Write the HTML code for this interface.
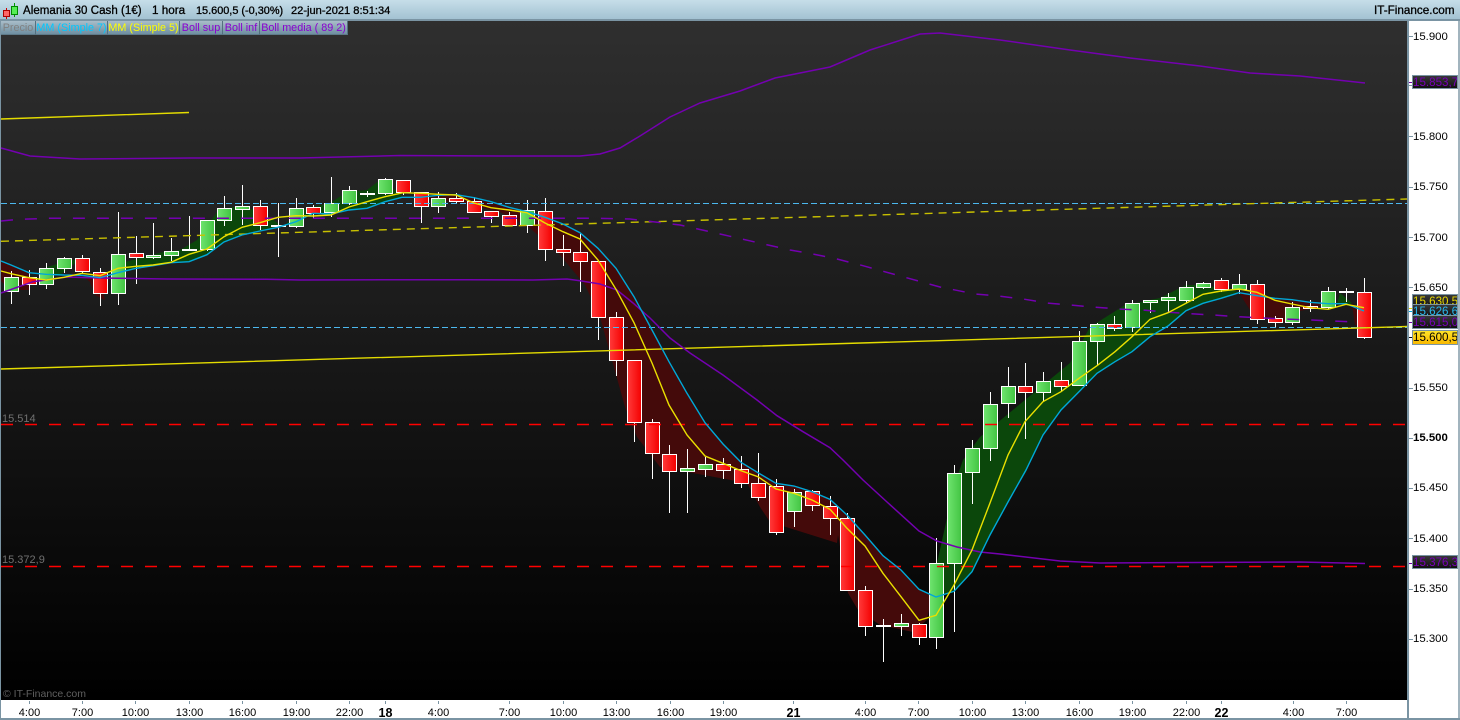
<!DOCTYPE html>
<html><head><meta charset="utf-8"><style>
html,body{margin:0;padding:0;background:#fff;width:1460px;height:720px;overflow:hidden}
svg{position:absolute;left:0;top:0}
.g{fill:url(#gg)}.r{fill:url(#gr)}
.g,.r{stroke:#fff;stroke-width:1;width:14px;shape-rendering:crispEdges}
.d{fill:#fff;width:15px;height:2px;shape-rendering:crispEdges}
div{position:absolute;font-family:"Liberation Sans",sans-serif;white-space:nowrap}
#top{left:0;top:0;width:1460px;height:19px;background:linear-gradient(#c6dee9,#a3c2d2);border-bottom:2px solid #7a94a3}
.t{top:4px;font-size:12px;line-height:14px;color:#000;-webkit-text-stroke:.3px #000}
.l{top:21px;height:12px;line-height:12px;font-size:10.8px;background:linear-gradient(#a9bdc9,#6f8fa1);border-right:1px solid #54707f;text-align:center;border-bottom:1px solid #5f7a89;padding-top:1px}
.y{left:1413px;font-size:11.4px;line-height:14px;color:#000}
.x{top:707px;font-size:11px;line-height:13px;color:#000;transform:translateX(-50%)}
.b{left:1412px;width:44px;height:12px;border:1px solid #7a94a3;font-size:11.6px;line-height:13px;text-align:center;background:linear-gradient(#383838,#101010);overflow:hidden}
</style></head><body>
<svg width="1460" height="720" viewBox="0 0 1460 720" fill="none">
<defs>
<linearGradient id="bg" x1="0" y1="0" x2="0" y2="1"><stop offset="0" stop-color="#2f2f2f"/><stop offset="1" stop-color="#000"/></linearGradient>
<linearGradient id="gg"><stop offset="0" stop-color="#6fe46f"/><stop offset="1" stop-color="#42c442"/></linearGradient>
<linearGradient id="gr"><stop offset="0" stop-color="#ff3a3a"/><stop offset="1" stop-color="#f40000"/></linearGradient>
</defs>
<rect x="1" y="21" width="1406" height="679" fill="url(#bg)"/>
<g fill="#0b470b">
<path d="M937 563L945 527 955 483 963 460 980 437 1070 363 1090 327 1125 305 1160 298 1180 288 1186 285 1203 285 1221 288 1239 292 1221 298.3 1203 303.3 1186 310.7 1168 326 1150 336.7 1132 351.7 1115 361.7 1097 373.3 1079 391.7 1061 410 1043 435 1026 472 1008 502 990 535 972 571.7 954 591.3 937 597Z"/>
<path d="M118 272.7L125 262 163 252 180 250 197 240 217 212 233 207 260 210 283 227 300 210 330 203 347 192 367 190 380 180 400 193 402 197.3 385 201.7 367 208.3 349 210 331 214 313 213.3 296 221.7 278 227.3 260 231 242 235 224 242 207 254.7 189 261.7 171 262.7 153 265.7 136 268.3Z"/>
<path d="M1337 303.7L1340 293 1352 303 1350 304Z"/>
<path d="M40 273.5L47 267 64 262 82 258 60 275 46 274.3Z"/>
</g>
<g fill="#440a0a">
<path d="M403 197.3L420 197.3 438 195.3 456 194.7 474 197.7 491 201.7 509 207.3 527 211.7 545 217.3 563 224 580 232.7 598 248.3 616 268.3 634 296.7 652 330 669 361.7 687 393.3 705 422.7 723 444 741 462.3 758 472.7 776 483.3 794 486 812 491.7 830 499.3 847 515 865 535 883 555.7 901 570 919 589.3 932 596 927 620 913 632 880 625 858 610 848 593 838 535 837 543 770 522 760 507 747 483 660 467 637 437 625 407 600 317 585 285 560 255 530 228 500 212 470 205 440 200Z"/>
<path d="M1239 292.7L1257 295.7 1275 298.3 1292 299.7 1310 302.3 1328 303.7 1310 309 1300 311 1285 322 1268 320 1250 310Z"/>
<path d="M1352 304L1364 311 1364 325 1355 325Z"/>
<path d="M1 262L11 265 29 272.7 30 290 10 290 1 281Z"/>
<path d="M82 275.3L100 277.7 105 300 95 295 90 282Z"/>
</g>
<path stroke="#fff" stroke-width="1" shape-rendering="crispEdges" d="M11.5 271V304M29.5 270V295M46.5 263V289M64.5 257V273M82.5 255V273M100.5 268V306M118.5 212V305M136.5 236V284M153.5 223V259M171.5 238V261M189.5 216V251M207.5 220V251M224.5 196V226M242.5 185V225M260.5 200V230M278.5 203V257M296.5 198V228M313.5 205V219M331.5 177V217M349.5 186V205M367.5 191V197M385.5 178V195M403.5 180V195M421.5 192V223M438.5 192V213M456.5 193V204M474.5 197V212M491.5 211V223M509.5 212V225M527.5 200V233M545.5 198V261M563.5 235V266M580.5 233V292M598.5 261V340M616.5 312V376M634.5 360V442M652.5 419V479M669.5 445V513M687.5 449V513M705.5 457V477M723.5 458V479M741.5 456V488M758.5 453V501M776.5 479V535M794.5 489V527M812.5 490V511M830.5 496V535M847.5 513V590M865.5 586V636M883.5 619V662M901.5 614V636M919.5 623V645M936.5 538V649M954.5 465V632M972.5 440V504M990.5 392V461M1008.5 367V418M1025.5 363V439M1043.5 372V401M1061.5 362V391M1079.5 331V385M1097.5 323V365M1114.5 316V331M1132.5 300V332M1150.5 300V313M1168.5 293V312M1186.5 281V303M1203.5 282V289M1221.5 278V292M1239.5 274V294M1257.5 280V324M1275.5 316V327M1292.5 302V325M1310.5 300V312M1328.5 287V309M1346.5 288V302M1364.5 278V339"/>
<rect class="g" x="4.5" y="277.5" height="14"/><rect class="r" x="22.5" y="277.5" height="7"/><rect class="g" x="39.5" y="268.5" height="16"/><rect class="g" x="57.5" y="258.5" height="10"/><rect class="r" x="75.5" y="258.5" height="13"/><rect class="r" x="93.5" y="272.5" height="21"/><rect class="g" x="111.5" y="254.5" height="39"/><rect class="r" x="129.5" y="253.5" height="4"/><rect class="g" x="146.5" y="255.5" height="2"/><rect class="g" x="164.5" y="251.5" height="4"/><rect class="d" x="182" y="249"/><rect class="g" x="200.5" y="220.5" height="29"/><rect class="g" x="217.5" y="208.5" height="12"/><rect class="g" x="235.5" y="206.5" height="3"/><rect class="r" x="253.5" y="206.5" height="19"/><rect class="d" x="271" y="225"/><rect class="g" x="289.5" y="208.5" height="18"/><rect class="r" x="306.5" y="207.5" height="6"/><rect class="g" x="324.5" y="203.5" height="9"/><rect class="g" x="342.5" y="190.5" height="13"/><rect class="d" x="360" y="193"/><rect class="g" x="378.5" y="179.5" height="14"/><rect class="r" x="396.5" y="180.5" height="12"/><rect class="r" x="414.5" y="192.5" height="14"/><rect class="g" x="431.5" y="198.5" height="8"/><rect class="r" x="449.5" y="198.5" height="3"/><rect class="r" x="467.5" y="201.5" height="11"/><rect class="r" x="484.5" y="211.5" height="5"/><rect class="r" x="502.5" y="215.5" height="10"/><rect class="g" x="520.5" y="210.5" height="15"/><rect class="r" x="538.5" y="211.5" height="38"/><rect class="r" x="556.5" y="249.5" height="3"/><rect class="r" x="573.5" y="252.5" height="9"/><rect class="r" x="591.5" y="261.5" height="56"/><rect class="r" x="609.5" y="317.5" height="43"/><rect class="r" x="627.5" y="360.5" height="62"/><rect class="r" x="645.5" y="422.5" height="31"/><rect class="r" x="662.5" y="454.5" height="17"/><rect class="g" x="680.5" y="468.5" height="3"/><rect class="g" x="698.5" y="464.5" height="5"/><rect class="r" x="716.5" y="464.5" height="6"/><rect class="r" x="734.5" y="469.5" height="14"/><rect class="r" x="751.5" y="483.5" height="14"/><rect class="r" x="769.5" y="486.5" height="46"/><rect class="g" x="787.5" y="492.5" height="19"/><rect class="r" x="805.5" y="491.5" height="14"/><rect class="r" x="823.5" y="506.5" height="12"/><rect class="r" x="840.5" y="518.5" height="72"/><rect class="r" x="858.5" y="590.5" height="36"/><rect class="d" x="876" y="625"/><rect class="g" x="894.5" y="623.5" height="3"/><rect class="r" x="912.5" y="624.5" height="13"/><rect class="g" x="929.5" y="563.5" height="74"/><rect class="g" x="947.5" y="473.5" height="90"/><rect class="g" x="965.5" y="448.5" height="24"/><rect class="g" x="983.5" y="404.5" height="44"/><rect class="g" x="1001.5" y="386.5" height="17"/><rect class="r" x="1018.5" y="386.5" height="6"/><rect class="g" x="1036.5" y="381.5" height="11"/><rect class="r" x="1054.5" y="380.5" height="6"/><rect class="g" x="1072.5" y="341.5" height="44"/><rect class="g" x="1090.5" y="324.5" height="17"/><rect class="r" x="1107.5" y="324.5" height="4"/><rect class="g" x="1125.5" y="303.5" height="24"/><rect class="g" x="1143.5" y="300.5" height="2"/><rect class="g" x="1161.5" y="297.5" height="3"/><rect class="g" x="1179.5" y="287.5" height="13"/><rect class="g" x="1196.5" y="283.5" height="4"/><rect class="r" x="1214.5" y="280.5" height="9"/><rect class="g" x="1232.5" y="284.5" height="5"/><rect class="r" x="1250.5" y="284.5" height="35"/><rect class="r" x="1268.5" y="318.5" height="4"/><rect class="g" x="1285.5" y="307.5" height="15"/><rect class="r" x="1303.5" y="306.5" height="2"/><rect class="g" x="1321.5" y="291.5" height="16"/><rect class="d" x="1339" y="291"/><rect class="r" x="1357.5" y="292.5" height="45"/>
<path stroke="#4cb8ee" stroke-width="1" stroke-dasharray="6 3" d="M1 203.5H1407M1 327.5H1407"/>
<path stroke="#c8c000" stroke-width="1.4" stroke-dasharray="8 6" d="M1 241.3L1407 199"/>
<path stroke="#e4dc00" stroke-width="1.4" d="M1 369L1407 326.5M1 119L189 112.5"/>
<path stroke="#ff0000" stroke-width="1.4" stroke-dasharray="12 12" d="M1 424.5H1407M1 566.5H1407"/>
<path stroke="#7400b0" stroke-width="1.5" d="M1 148L30 156 80 159 190 158 300 158 400 155.5 500 156 580 156 600 154 620 148 640 136 670 117 700 103 740 91 775 78 830 67 870 50 920 34 940 33 1000 40 1070 50 1130 58 1200 66 1250 73 1300 76 1365 83"/>
<path stroke="#7400b0" stroke-width="1.5" d="M1 293L33 281.7 67 277 100 278 167 279 267 279.3 300 280 400 279.7 467 279.7 533 280 567 279 580 280.7 600 284 617 290 633 303 650 318 670 338 690 353 723 375 757 400 777 415.7 803 431.7 830 447.7 843 460 863 480 887 502 919 531 937 541 957 547 980 552 1000 554 1060 561 1100 563 1200 562.5 1300 562 1365 563.5"/>
<path stroke="#7400b0" stroke-width="1.5" stroke-dasharray="12 12" d="M1 221L20 219.3 48 218.3 600 218.3 630 219 680 225 720 234 790 250 813 254 837 259 863 265.7 940 287 975 294 998 296 1023 299 1047 303 1070 305 1093 307 1118 309 1142 310 1165 312 1190 313.7 1213 315 1238 316.7 1262 318 1285 319 1310 320 1333 321 1358 322"/>
<path stroke="#00a8d8" stroke-width="1.4" d="M1 261L11 265 29 272.7 46 274.3 64 275 82 275.3 100 277.7 118 272.7 136 268.3 153 265.7 171 262.7 189 261.7 207 254.7 224 242 242 235 260 231 278 227.3 296 221.7 313 213.3 331 214 349 210 367 208.3 385 201.7 402 197.3 420 197.3 438 195.3 456 194.7 474 197.7 491 201.7 509 207.3 527 211.7 545 217.3 563 224 580 232.7 598 248.3 616 268.3 634 296.7 652 330 669 361.7 687 393.3 705 422.7 723 444 741 462.3 758 472.7 776 483.3 794 486 812 491.7 830 499.3 847 515 865 535 883 555.7 901 570 919 589.3 936 597 954 591.3 972 571.7 990 535 1008 502 1026 470 1043 435 1061 410 1079 391.7 1097 373.3 1115 361.7 1132 351.7 1150 336.7 1168 326 1186 310.7 1203 303.3 1221 298.3 1239 292.7 1257 295.7 1275 298.3 1292 299.7 1310 302.3 1328 303.7 1346 303.7 1364 311"/>
<path stroke="#eae000" stroke-width="1.4" d="M1 271L11 273.7 29 277.7 46 280 64 277.3 82 273.3 100 275.7 118 268.3 136 266.3 153 265 171 262.3 189 254.3 207 249 224 236.7 242 227.3 260 222.7 278 217.3 296 215.7 313 216 331 215 349 207 367 201.7 385 196.7 403 192.7 421 193.3 438 194.3 456 195 474 203 491 207.7 509 210 527 212.7 545 223 563 231.7 580 239 598 260 616 289.3 634 322.7 652 363 669 405 687 435 705 456 723 463.3 741 470.7 758 476.7 776 489 794 493.3 812 500 830 509.3 847 528.3 865 546 883 573.3 901 596.7 919 620.3 936 615.3 954 585 972 550 990 503 1008 455 1025 421.7 1043 401.7 1061 391.7 1079 378.3 1097 365.7 1115 351.7 1132 336.7 1150 319.3 1168 312.7 1186 303.3 1203 294.3 1221 291 1239 289 1257 292.3 1275 300.3 1292 304 1310 307.7 1328 309.3 1346 304.3 1364 307.7"/>
<rect x="1407" y="21" width="2" height="697" fill="#7a94a3"/>
<rect x="0" y="21" width="1" height="699" fill="#7a94a3"/>
<rect x="0" y="718" width="1460" height="2" fill="#7a94a3"/>
<rect x="1458" y="21" width="2" height="699" fill="#7a94a3" opacity=".7"/>
<path stroke="#7a94a3" shape-rendering="crispEdges" d="M1409 36.5h4M1409 136.5h4M1409 187.5h4M1409 237.5h4M1409 287.5h4M1409 388.5h4M1409 438.5h4M1409 488.5h4M1409 538.5h4M1409 589.5h4M1409 639.5h4M1409 85.5h4M29.5 701v3M82.5 701v3M135.5 701v3M189.5 701v3M242.5 701v3M296.5 701v3M349.5 701v3M385.5 701v3M438.5 701v3M509.5 701v3M563.5 701v3M616.5 701v3M670.5 701v3M723.5 701v3M793.5 701v3M865.5 701v3M918.5 701v3M972.5 701v3M1025.5 701v3M1079.5 701v3M1132.5 701v3M1186.5 701v3M1221.5 701v3M1293.5 701v3M1346.5 701v3"/>
<path stroke="#6f00a8" shape-rendering="crispEdges" d="M1409 82.5h4M1409 322.5h4M1409 563.5h4"/>
<path stroke="#e0d800" shape-rendering="crispEdges" d="M1409 308.5h4"/>
<path stroke="#00a8d8" shape-rendering="crispEdges" d="M1409 311.5h4"/>
<path stroke="#000" shape-rendering="crispEdges" d="M1409 337.5h4"/>
</svg>
<div id="top"></div>
<svg width="20" height="20" viewBox="0 0 20 20" fill="none" shape-rendering="crispEdges"><path stroke="#c00" d="M6.5 8v11"/><rect x="3.5" y="10.5" width="6" height="6" fill="#f66" stroke="#a00"/><path stroke="#090" d="M14.5 3v14"/><rect x="11.5" y="6.500" width="6" height="8" fill="#5e5" stroke="#080"/></svg>
<div class="t" style="left:23px;font-size:11.5px;letter-spacing:.05px">Alemania 30 Cash (1€)</div>
<div class="t" style="left:152px;font-size:11.7px">1 hora</div>
<div class="t" style="left:196px;font-size:10.9px">15.600,5 (-0,30%)</div>
<div class="t" style="left:291px;font-size:11.1px">22-jun-2021 8:51:34</div>
<div class="t" style="left:1374px;font-size:11.7px">IT-Finance.com</div>
<div class="l" style="left:1px;width:34px;color:#808080">Precio</div>
<div class="l" style="left:36px;width:71px;color:#00c8ff">MM (Simple 7)</div>
<div class="l" style="left:108px;width:71px;color:#ffff00">MM (Simple 5)</div>
<div class="l" style="left:180px;width:42px;color:#8a00d0">Boll sup</div>
<div class="l" style="left:223px;width:36px;color:#8a00d0">Boll inf</div>
<div class="l" style="left:260px;width:87px;color:#8a00d0">Boll media ( 89 2)</div>
<div style="left:2px;top:413px;font-size:11px;line-height:13px;color:#707070">15.514</div>
<div style="left:2px;top:554px;font-size:11px;line-height:13px;color:#707070">15.372,9</div>
<div style="left:3px;top:688px;font-size:10.5px;line-height:13px;color:#5f5f5f">© IT-Finance.com</div>
<div class="y" style="top:30px">15.900</div>
<div class="y" style="top:130px">15.800</div>
<div class="y" style="top:180px">15.750</div>
<div class="y" style="top:231px">15.700</div>
<div class="y" style="top:281px">15.650</div>
<div class="y" style="top:381px">15.550</div>
<div class="y" style="top:431px;font-weight:bold">15.500</div>
<div class="y" style="top:481px">15.450</div>
<div class="y" style="top:532px">15.400</div>
<div class="y" style="top:582px">15.350</div>
<div class="y" style="top:632px">15.300</div>
<div class="b" style="top:75px;color:#7800b8">15.853,7</div>
<div class="b" style="top:294px;color:#e8d800">15.630,5</div>
<div class="b" style="top:304px;color:#28b8ee">15.626,6</div>
<div class="b" style="top:315px;color:#7800b8">15.615,0</div>
<div class="b" style="top:330px;height:13px;color:#000;background:linear-gradient(#ffe428,#f8b800)">15.600,5</div>
<div class="b" style="top:555px;color:#7800b8">15.376,3</div>
<div class="x" style="left:29.500px">4:00</div><div class="x" style="left:82.500px">7:00</div><div class="x" style="left:135.500px">10:00</div><div class="x" style="left:189.500px">13:00</div><div class="x" style="left:242.500px">16:00</div><div class="x" style="left:296.500px">19:00</div><div class="x" style="left:349.500px">22:00</div><div class="x" style="left:385.500px;font-weight:bold;font-size:12.500px">18</div><div class="x" style="left:438.500px">4:00</div><div class="x" style="left:509.500px">7:00</div><div class="x" style="left:563.500px">10:00</div><div class="x" style="left:616.500px">13:00</div><div class="x" style="left:670.500px">16:00</div><div class="x" style="left:723.500px">19:00</div><div class="x" style="left:793.500px;font-weight:bold;font-size:12.500px">21</div><div class="x" style="left:865.500px">4:00</div><div class="x" style="left:918.500px">7:00</div><div class="x" style="left:972.500px">10:00</div><div class="x" style="left:1025.500px">13:00</div><div class="x" style="left:1079.500px">16:00</div><div class="x" style="left:1132.500px">19:00</div><div class="x" style="left:1186.500px">22:00</div><div class="x" style="left:1221.500px;font-weight:bold;font-size:12.500px">22</div><div class="x" style="left:1293.500px">4:00</div><div class="x" style="left:1346.500px">7:00</div>
</body></html>
